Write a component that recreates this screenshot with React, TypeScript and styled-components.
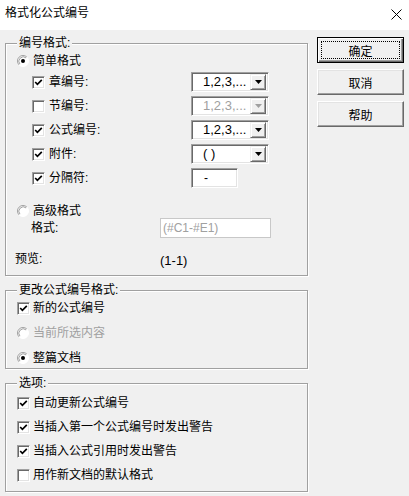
import React from "react";
import styled, { createGlobalStyle, css } from "styled-components";

const FONT = `"Liberation Sans", "Noto Sans CJK SC", sans-serif`;

const GlobalStyle = createGlobalStyle`
    html, body {
        margin: 0;
        padding: 0;
        background: #f0f0f0;
    }
    body {
        font-family: ${FONT};
        font-size: 12px;
        color: #000;
    }
`;

// classic sunken 3d edge, used by checkboxes, combos and edit boxes
const sunken = css`
    border: 1px solid;
    border-color: #a0a0a0 #ffffff #ffffff #a0a0a0;
    box-shadow: inset 1px 1px 0 #696969, inset -1px -1px 0 #e3e3e3;
`;

const Dialog = styled.div`
    width: 409px;
    height: 496px;
    background: #f0f0f0;
    display: flex;
    flex-direction: column;
    overflow: hidden;
`;

const TitleBar = styled.div`
    height: 30px;
    flex: none;
    background: #fff;
    display: flex;
    align-items: center;
    justify-content: space-between;
    padding: 0 7px 0 5px;
    box-sizing: border-box;
`;

const Title = styled.span`
    font-size: 12px;
    line-height: 14px;
    padding-bottom: 4px;
`;

const CloseButton = styled.span`
    display: flex;
    padding-bottom: 2px;
`;

const Body = styled.div`
    display: flex;
    align-items: flex-start;
    padding: 6px 0 0 5px;
    gap: 9px;
`;

const LeftColumn = styled.div`
    width: 303px;
    display: flex;
    flex-direction: column;
    gap: 7px;
`;

const Group = styled.fieldset`
    margin: 0;
    padding: 0;
    min-width: 0;
    border: 1px solid #a0a0a0;
    box-shadow: 1px 1px 0 #fff, inset 1px 1px 0 #fff;
`;

const Legend = styled.legend`
    margin-left: 11px;
    padding: 0 2px;
    line-height: 15px;
    font-size: 12px;
    background: #f0f0f0;
`;

const GroupContent = styled.div<{ $top: number; $bottom: number; $gap?: number }>`
    display: flex;
    flex-direction: column;
    gap: ${p => p.$gap ?? 0}px;
    padding: ${p => p.$top}px 0 ${p => p.$bottom}px 0;
`;

const Row = styled.div<{ $indent: number; $height?: number; $mt?: number }>`
    display: flex;
    align-items: center;
    height: ${p => p.$height ?? 16}px;
    padding-left: ${p => p.$indent}px;
    margin-top: ${p => p.$mt ?? 0}px;
`;

const Label = styled.label<{ $width?: number; $gap?: number; $disabled?: boolean }>`
    display: flex;
    align-items: center;
    gap: ${p => p.$gap ?? 4}px;
    line-height: 16px;
    white-space: nowrap;
    color: ${p => (p.$disabled ? "#a0a0a0" : "#000")};
    ${p => p.$width !== undefined && `width: ${p.$width}px; flex: none;`}
`;

const Box = styled.span`
    width: 13px;
    height: 13px;
    box-sizing: border-box;
    flex: none;
    background: #fff;
    display: flex;
    align-items: center;
    justify-content: center;
    ${sunken};
`;

const Combo = styled.div`
    width: 78px;
    height: 20px;
    box-sizing: border-box;
    background: #fff;
    display: flex;
    align-items: center;
    padding: 2px;
    ${sunken};
`;

const ComboValue = styled.span<{ $disabled?: boolean }>`
    flex: 1;
    padding-left: 9px;
    font-size: 13px;
    line-height: 16px;
    white-space: nowrap;
    overflow: hidden;
    color: ${p => (p.$disabled ? "#a0a0a0" : "#000")};
`;

const DropButton = styled.span`
    width: 16px;
    height: 16px;
    box-sizing: border-box;
    flex: none;
    background: #f0f0f0;
    border: 1px solid;
    border-color: #f0f0f0 #696969 #696969 #f0f0f0;
    box-shadow: inset 1px 1px 0 #fff, inset -1px -1px 0 #a0a0a0;
    display: flex;
    align-items: center;
    justify-content: center;
`;

const EditBox = styled.div<{ $width: number; $disabled?: boolean }>`
    width: ${p => p.$width}px;
    height: 20px;
    box-sizing: border-box;
    background: #fff;
    display: flex;
    align-items: center;
    line-height: 16px;
    white-space: nowrap;
    ${p =>
        p.$disabled
            ? css`
                  border: 1px solid #c8c8c8;
                  color: #a0a0a0;
                  padding-left: 2px;
              `
            : css`
                  ${sunken};
                  padding-left: 12px;
              `}
`;

const Preview = styled.span`
    font-size: 13px;
    line-height: 16px;
    padding-top: 3px;
`;

const ButtonColumn = styled.div`
    display: flex;
    flex-direction: column;
    gap: 6px;
    padding-top: 1px;
`;

const DialogButton = styled.button<{ $default?: boolean }>`
    width: 87px;
    height: 26px;
    box-sizing: border-box;
    margin: 0;
    padding: 3px;
    display: flex;
    align-items: stretch;
    background: #f0f0f0;
    font-family: ${FONT};
    font-size: 12px;
    color: #000;
    ${p =>
        p.$default
            ? css`
                  border: 1px solid #000;
                  box-shadow: inset 1px 1px 0 #fff, inset -1px -1px 0 #696969,
                      inset -2px -2px 0 #a0a0a0;
              `
            : css`
                  border: 1px solid;
                  border-color: #fff #696969 #696969 #fff;
                  box-shadow: inset -1px -1px 0 #a0a0a0, inset 1px 1px 0 #e3e3e3;
              `}
`;

const ButtonFace = styled.span<{ $focused?: boolean }>`
    flex: 1;
    display: flex;
    align-items: center;
    justify-content: center;
    border: 1px ${p => (p.$focused ? "dotted #000" : "solid transparent")};
`;

const CheckBox: React.FC<{ checked?: boolean }> = ({ checked }) => (
    <Box>
        {checked && (
            <svg width="9" height="9" viewBox="0 0 9 9">
                <polyline points="1.2,4 3.4,6.3 7.8,1.8" fill="none" stroke="#000" strokeWidth="1.7" />
            </svg>
        )}
    </Box>
);

const Radio: React.FC<{ checked?: boolean }> = ({ checked }) => (
    <svg width="12" height="12" viewBox="0 0 12 12" style={{ flex: "none" }}>
        <circle cx="6" cy="6" r="5.5" fill="#fff" />
        <path d="M2.1 9.9 A5.5 5.5 0 0 1 9.9 2.1" fill="none" stroke="#a0a0a0" />
        <path d="M2.9 9.1 A4.4 4.4 0 0 1 9.1 2.9" fill="none" stroke="#8a8a8a" strokeWidth="0.8" />
        <path d="M9.9 2.1 A5.5 5.5 0 0 1 2.1 9.9" fill="none" stroke="#ffffff" />
        {checked && <circle cx="6" cy="6" r="2" fill="#000" />}
    </svg>
);

const Arrow: React.FC<{ disabled?: boolean }> = ({ disabled }) => (
    <svg width="7" height="4" viewBox="0 0 7 4">
        <polygon points="0,0 7,0 3.5,4" fill={disabled ? "#a0a0a0" : "#000"} />
    </svg>
);

const ComboBox: React.FC<{ value: string; disabled?: boolean }> = ({ value, disabled }) => (
    <Combo>
        <ComboValue $disabled={disabled}>{value}</ComboValue>
        <DropButton>
            <Arrow disabled={disabled} />
        </DropButton>
    </Combo>
);

const numberParts = [
    { label: "章编号:", checked: true, value: "1,2,3,..." },
    { label: "节编号:", checked: false, value: "1,2,3,...", disabled: true },
    { label: "公式编号:", checked: true, value: "1,2,3,..." },
    { label: "附件:", checked: true, value: "( )" },
];

const options = [
    { label: "自动更新公式编号", checked: true },
    { label: "当插入第一个公式编号时发出警告", checked: true },
    { label: "当插入公式引用时发出警告", checked: true },
    { label: "用作新文档的默认格式", checked: false },
];

const App: React.FC = () => (
    <>
        <GlobalStyle />
        <Dialog>
            <TitleBar>
                <Title>格式化公式编号</Title>
                <CloseButton>
                    <svg width="11" height="11" viewBox="0 0 11 11">
                        <path d="M0.5 0.5 L10.5 10.5 M10.5 0.5 L0.5 10.5" stroke="#000" strokeWidth="1" />
                    </svg>
                </CloseButton>
            </TitleBar>
            <Body>
                <LeftColumn>
                    <Group>
                        <Legend>编号格式:</Legend>
                        <GroupContent $top={2} $bottom={8}>
                            <Row $indent={11}>
                                <Label>
                                    <Radio checked />
                                    简单格式
                                </Label>
                            </Row>
                            {numberParts.map((part, i) => (
                                <Row key={part.label} $indent={26} $height={20} $mt={i === 0 ? 3 : 4}>
                                    <Label $width={159}>
                                        <CheckBox checked={part.checked} />
                                        {part.label}
                                    </Label>
                                    <ComboBox value={part.value} disabled={part.disabled} />
                                </Row>
                            ))}
                            <Row $indent={26} $height={20} $mt={4}>
                                <Label $width={159}>
                                    <CheckBox checked />
                                    分隔符:
                                </Label>
                                <EditBox $width={47}>-</EditBox>
                            </Row>
                            <Row $indent={11} $height={14} $mt={16}>
                                <Label>
                                    <Radio />
                                    高级格式
                                </Label>
                            </Row>
                            <Row $indent={25} $height={20}>
                                <Label $width={129}>格式:</Label>
                                <EditBox $width={111} $disabled>
                                    (#C1-#E1)
                                </EditBox>
                            </Row>
                            <Row $indent={9} $mt={13}>
                                <Label $width={145}>预览:</Label>
                                <Preview>(1-1)</Preview>
                            </Row>
                        </GroupContent>
                    </Group>

                    <Group>
                        <Legend>更改公式编号格式:</Legend>
                        <GroupContent $top={2} $bottom={2} $gap={9}>
                            <Row $indent={11}>
                                <Label $gap={3}>
                                    <CheckBox checked />
                                    新的公式编号
                                </Label>
                            </Row>
                            <Row $indent={11}>
                                <Label $disabled>
                                    <Radio />
                                    当前所选内容
                                </Label>
                            </Row>
                            <Row $indent={11}>
                                <Label>
                                    <Radio checked />
                                    整篇文档
                                </Label>
                            </Row>
                        </GroupContent>
                    </Group>

                    <Group>
                        <Legend>选项:</Legend>
                        <GroupContent $top={4} $bottom={8} $gap={8}>
                            {options.map(opt => (
                                <Row key={opt.label} $indent={11}>
                                    <Label $gap={3}>
                                        <CheckBox checked={opt.checked} />
                                        {opt.label}
                                    </Label>
                                </Row>
                            ))}
                        </GroupContent>
                    </Group>
                </LeftColumn>

                <ButtonColumn>
                    <DialogButton $default>
                        <ButtonFace $focused>确定</ButtonFace>
                    </DialogButton>
                    <DialogButton>
                        <ButtonFace>取消</ButtonFace>
                    </DialogButton>
                    <DialogButton>
                        <ButtonFace>帮助</ButtonFace>
                    </DialogButton>
                </ButtonColumn>
            </Body>
        </Dialog>
    </>
);

export default App;
